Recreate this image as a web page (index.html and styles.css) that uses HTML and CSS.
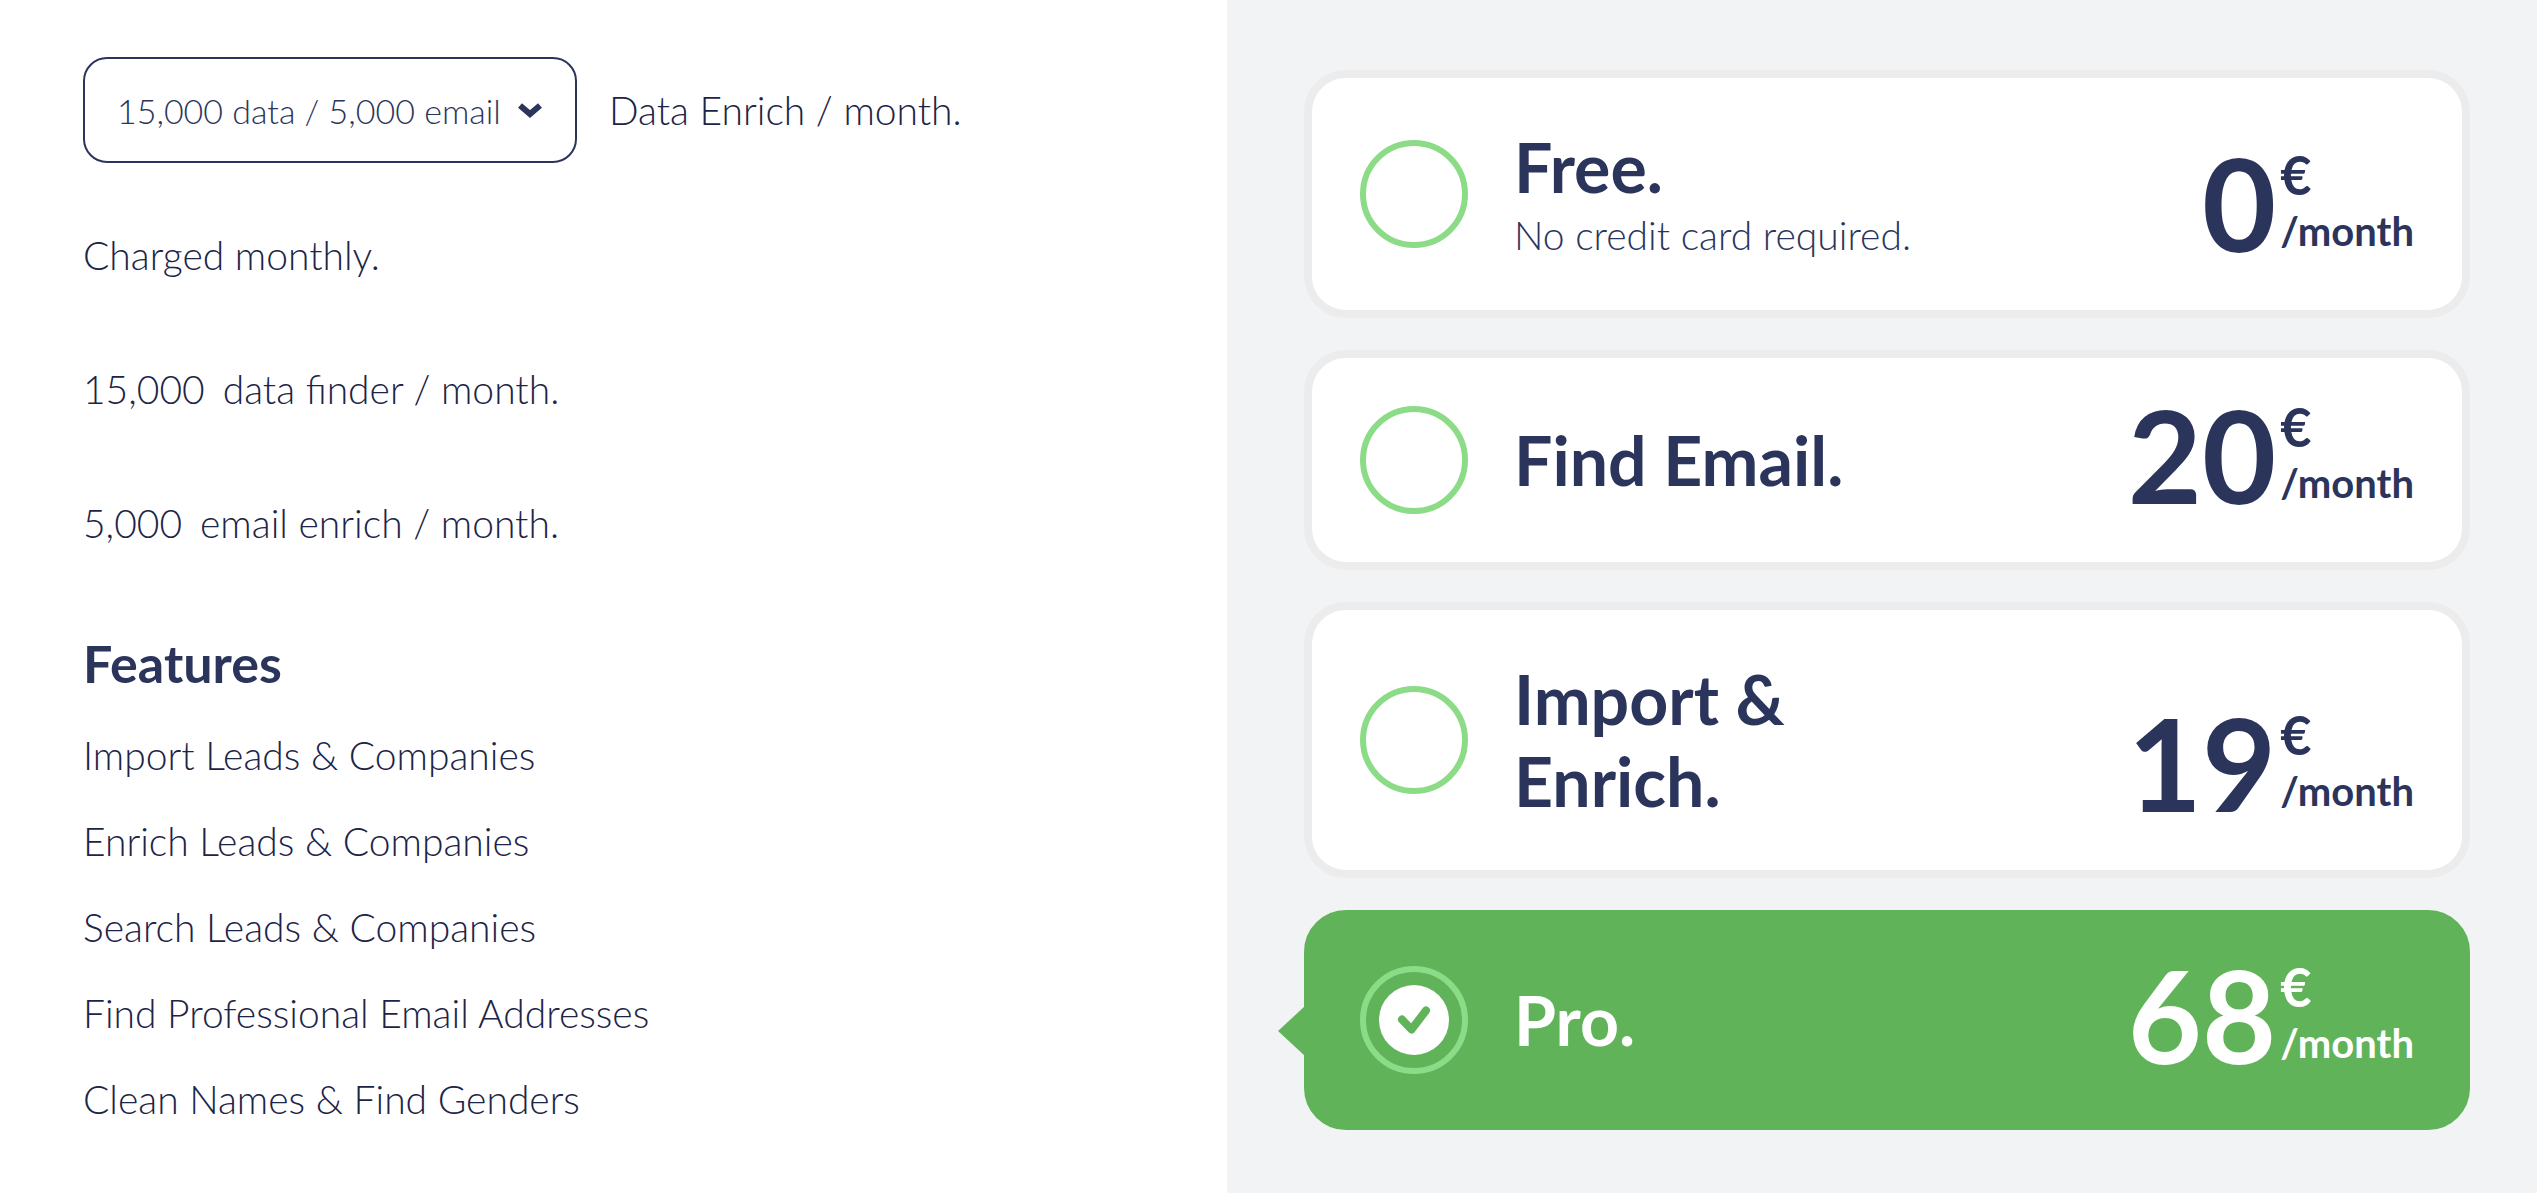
FILE: index.html
```html
<!DOCTYPE html>
<html lang="en">
<head>
  <meta charset="UTF-8" />
  <meta name="viewport" content="width=device-width, initial-scale=1.0"/>
  <title>Pricing</title>
  <link rel="stylesheet" href="styles.css">
</head>
<body>
  <main class="pricing">
    <section class="details">
      <div class="volume">
        <div class="select-box">
          <select id="volume">
            <option selected>15,000 data / 5,000 email</option>
          </select>
          <svg class="chevron" viewBox="0 0 26 16" aria-hidden="true">
            <path d="M3 3.5 L13 12 L23 3.5" />
          </svg>
        </div>
        <label for="volume">Data Enrich / month.</label>
      </div>

      <p>Charged monthly.</p>
      <p class="quota"><span>15,000</span><span>data finder / month.</span></p>
      <p class="quota"><span>5,000</span><span>email enrich / month.</span></p>

      <h2>Features</h2>
      <ul class="features">
        <li>Import Leads &amp; Companies</li>
        <li>Enrich Leads &amp; Companies</li>
        <li>Search Leads &amp; Companies</li>
        <li>Find Professional Email Addresses</li>
        <li>Clean Names &amp; Find Genders</li>
      </ul>
    </section>

    <section class="plans">
      <label class="plan">
        <span class="ring"><input type="radio" name="plan" value="free"></span>
        <span class="info">
          <span class="name">Free.</span>
          <span class="note">No credit card required.</span>
        </span>
        <span class="price">
          <span class="amount">0</span>
          <span class="unit"><span class="euro">€</span><span class="per">/month</span></span>
        </span>
      </label>

      <label class="plan">
        <span class="ring"><input type="radio" name="plan" value="find"></span>
        <span class="info"><span class="name">Find Email.</span></span>
        <span class="price">
          <span class="amount">20</span>
          <span class="unit"><span class="euro">€</span><span class="per">/month</span></span>
        </span>
      </label>

      <label class="plan">
        <span class="ring"><input type="radio" name="plan" value="import"></span>
        <span class="info"><span class="name">Import &amp; Enrich.</span></span>
        <span class="price">
          <span class="amount">19</span>
          <span class="unit"><span class="euro">€</span><span class="per">/month</span></span>
        </span>
      </label>

      <label class="plan active">
        <span class="ring">
          <input type="radio" name="plan" value="pro" checked>
          <svg class="check" viewBox="0 0 70 70" aria-hidden="true">
            <circle cx="35" cy="35" r="35" />
            <path d="M23 34.5 L32.5 44.5 L47 25.5" />
          </svg>
        </span>
        <span class="info"><span class="name">Pro.</span></span>
        <span class="price">
          <span class="amount">68</span>
          <span class="unit"><span class="euro">€</span><span class="per">/month</span></span>
        </span>
      </label>
    </section>
  </main>
</body>
</html>
```
FILE: styles.css
```css
* {
  box-sizing: border-box;
}
body {
  margin: 0;
  font-family: Lato, "Liberation Sans", sans-serif;
  font-size: 39px;
  font-weight: 300;
  line-height: 54px;
  color: #1c2447;
  background: #fff;
}
.pricing {
  display: grid;
  grid-template-columns: 1227fr 1310fr;
  min-height: 100vh;
}

/* left side */
.details {
  padding: 57px 83px 40px;
}
.volume {
  display: flex;
  align-items: center;
  gap: 32px;
  margin-bottom: 65px;
}
.select-box {
  position: relative;
}
.select-box select {
  appearance: none;
  display: block;
  width: 494px;
  height: 106px;
  padding: 0 54px 0 32px;
  border: 2px solid #2b355c;
  border-radius: 24px;
  background: #fff;
  color: #2b355c;
  font-family: inherit;
  font-size: 34px;
  font-weight: 300;
}
.chevron {
  position: absolute;
  right: 34px;
  top: 45px;
  width: 26px;
  height: 16px;
  fill: none;
  stroke: #2b355c;
  stroke-width: 6;
  pointer-events: none;
}
.details p {
  margin: 0 0 80px;
}
.quota {
  display: flex;
  gap: 18px;
}
.details h2 {
  margin: 0 0 32px;
  font-size: 52px;
  font-weight: 700;
  line-height: 66px;
  color: #2b355c;
}
.features {
  display: grid;
  gap: 32px;
  margin: 0;
  padding: 0;
  list-style: none;
}

/* right side */
.plans {
  display: flex;
  flex-direction: column;
  gap: 32px;
  padding: 70px 67px 63px 77px;
  background: #f2f3f5;
}
.plan {
  position: relative;
  display: flex;
  align-items: center;
  padding: 48px;
  border: 8px solid #ececec;
  border-radius: 42px;
  background: #fff;
  color: #2b355c;
  cursor: pointer;
}
.ring {
  display: grid;
  place-items: center;
  flex: none;
  width: 108px;
  height: 108px;
  margin-right: 46px;
}
.ring > * {
  grid-area: 1 / 1;
}
.ring input {
  appearance: none;
  width: 108px;
  height: 108px;
  margin: 0;
  border: 6px solid #8bdb87;
  border-radius: 50%;
  cursor: pointer;
}
.check {
  width: 70px;
  height: 70px;
  fill: #fff;
  pointer-events: none;
}
.check path {
  fill: none;
  stroke: #61b35a;
  stroke-width: 8;
  stroke-linecap: round;
  stroke-linejoin: round;
}
.info {
  flex: 1;
}
.name {
  display: block;
  max-width: 420px;
  font-size: 68px;
  font-weight: 700;
  line-height: 82px;
}
.note {
  display: block;
}
.price {
  display: flex;
  align-items: flex-start;
  align-self: flex-end;
  gap: 4px;
  height: 108px;
  font-weight: 700;
}
.amount {
  font-size: 128px;
  line-height: 98px;
}
.unit {
  display: flex;
  flex-direction: column;
  gap: 10px;
}
.euro {
  font-size: 54px;
  line-height: 42px;
}
.per {
  font-size: 40px;
  line-height: 50px;
}
.plan.active {
  border-color: #61b35a;
  background: #61b35a;
  color: #fff;
}
/* pointer towards the details */
.plan.active::before {
  content: "";
  position: absolute;
  top: 88px;
  left: -34px;
  width: 27px;
  height: 50px;
  background: #61b35a;
  clip-path: polygon(100% 0, 100% 100%, 0 50%);
}
```
